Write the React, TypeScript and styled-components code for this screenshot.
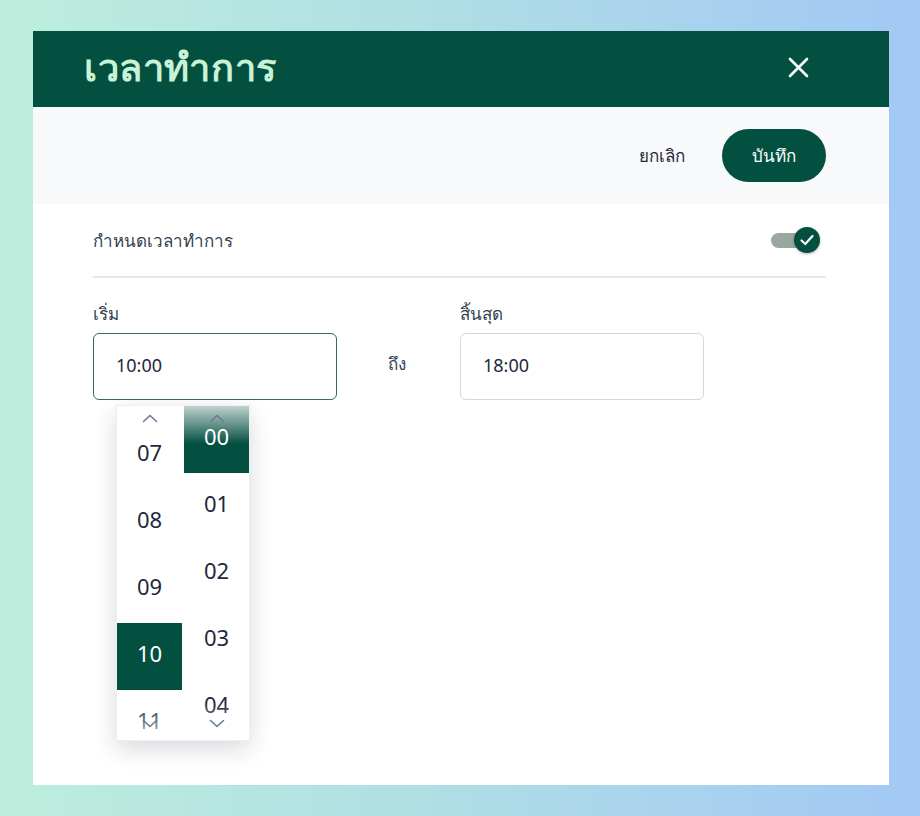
import styled, { createGlobalStyle } from "styled-components";

const GlobalStyle = createGlobalStyle`
  html, body {
    margin: 0;
    padding: 0;
  }
  body {
    font-family: "Noto Sans", "Inter", sans-serif;
    background: linear-gradient(90deg, #bdeedc 0%, #b0dfe4 45%, #a2c8f5 100%);
    min-height: 816px;
  }
`;

const Page = styled.div`
  width: 920px;
  height: 816px;
  padding: 31px 0 0 33px;
  box-sizing: border-box;
`;

const Modal = styled.div`
  width: 856px;
  height: 754px;
  background: #ffffff;
  display: flex;
  flex-direction: column;
`;

const Header = styled.div`
  height: 76px;
  background: #034f40;
  display: flex;
  align-items: center;
  justify-content: space-between;
  padding: 0 80px 4px 51px;
  box-sizing: border-box;
`;

const Title = styled.h1`
  margin: 0;
  font-size: 38px;
  font-weight: 600;
  color: #c9f3d6;
  letter-spacing: 0.6px;
`;

const CloseButton = styled.button`
  border: none;
  background: none;
  padding: 0;
  width: 22px;
  height: 22px;
  display: flex;
  align-items: center;
  justify-content: center;
  cursor: pointer;
`;

const ActionBar = styled.div`
  height: 97px;
  background: #f7f9fb;
  display: flex;
  align-items: center;
  justify-content: flex-end;
  gap: 37px;
  padding: 0 63px 0 60px;
  box-sizing: border-box;
`;

const TextButton = styled.button`
  border: none;
  background: none;
  padding: 0;
  font-family: inherit;
  font-size: 17px;
  color: #1f2937;
  cursor: pointer;
`;

const PrimaryButton = styled.button`
  border: none;
  height: 53px;
  width: 104px;
  border-radius: 27px;
  background: #034f40;
  color: #ffffff;
  font-family: inherit;
  font-size: 17px;
  cursor: pointer;
`;

const Body = styled.div`
  padding: 0 63px 0 60px;
  display: flex;
  flex-direction: column;
`;

const ToggleRow = styled.div`
  height: 72px;
  display: flex;
  align-items: center;
  justify-content: space-between;
  border-bottom: 2px solid #e3e9f1;
  padding-right: 6px;
`;

const RowLabel = styled.span`
  font-size: 17px;
  color: #334155;
`;

const Toggle = styled.div`
  position: relative;
  width: 49px;
  height: 26px;
  display: flex;
  align-items: center;
`;

const Track = styled.div`
  width: 36px;
  height: 15px;
  border-radius: 8px;
  background: #9aa6a1;
`;

const Thumb = styled.div`
  position: absolute;
  right: 0;
  top: 0;
  width: 26px;
  height: 26px;
  border-radius: 50%;
  background: #034f40;
  display: flex;
  align-items: center;
  justify-content: center;
  box-shadow: 0 1px 3px rgba(0, 0, 0, 0.3);
`;

const TimeRow = styled.div`
  display: flex;
  align-items: flex-end;
  margin-top: 25px;
`;

const Field = styled.div`
  position: relative;
  display: flex;
  flex-direction: column;
  gap: 8px;
`;

const FieldLabel = styled.label`
  font-size: 17px;
  color: #334155;
  line-height: 22px;
`;

const TimeInput = styled.div<{ $focused?: boolean }>`
  width: 244px;
  height: 67px;
  box-sizing: border-box;
  border-radius: 6px;
  border: 1px solid ${(p) => (p.$focused ? "#2f6f5e" : "#cfd8e3")};
  display: flex;
  align-items: center;
  padding: 0 0 3px 22px;
  font-size: 18px;
  color: #1e293b;
`;

const Between = styled.span`
  width: 123px;
  height: 67px;
  display: flex;
  align-items: center;
  justify-content: center;
  font-size: 17px;
  color: #334155;
  padding: 0 4px 6px 0;
  box-sizing: border-box;
`;

const Picker = styled.div`
  position: absolute;
  top: 102px;
  left: 23px;
  width: 134px;
  height: 336px;
  background: #ffffff;
  border: 1px solid #eceff3;
  box-sizing: border-box;
  box-shadow: 0 8px 22px rgba(15, 23, 42, 0.16);
  display: flex;
  gap: 2px;
  overflow: hidden;
`;

const Column = styled.div`
  position: relative;
  width: 65px;
  height: 100%;
  overflow: hidden;
`;

const List = styled.div<{ $offset: number }>`
  display: flex;
  flex-direction: column;
  padding-top: ${(p) => p.$offset}px;
`;

const Cell = styled.div<{ $selected?: boolean }>`
  height: 67px;
  flex: none;
  display: flex;
  align-items: center;
  justify-content: center;
  padding-bottom: 8px;
  box-sizing: border-box;
  font-size: 22px;
  color: ${(p) => (p.$selected ? "#ffffff" : "#1e293b")};
  background: ${(p) => (p.$selected ? "#034f40" : "transparent")};
`;

const Fade = styled.div<{ $bottom?: boolean }>`
  position: absolute;
  left: 0;
  right: 0;
  height: 38px;
  ${(p) => (p.$bottom ? "bottom: 0;" : "top: 0;")}
  background: linear-gradient(
    ${(p) => (p.$bottom ? "0deg" : "180deg")},
    rgba(255, 255, 255, 0.75) 0%,
    rgba(255, 255, 255, 0) 100%
  );
  display: flex;
  justify-content: center;
  align-items: ${(p) => (p.$bottom ? "flex-end" : "flex-start")};
  padding: ${(p) => (p.$bottom ? "0 0 12px" : "8px 0 0")};
  box-sizing: border-box;
`;

const Chevron = ({ down }: { down?: boolean }) => (
  <svg width="16" height="9" viewBox="0 0 16 9" fill="none">
    <path
      d={down ? "M1.5 1.5 L8 7.5 L14.5 1.5" : "M1.5 7.5 L8 1.5 L14.5 7.5"}
      stroke="#6b7a8c"
      strokeWidth="1.6"
      strokeLinecap="round"
      strokeLinejoin="round"
    />
  </svg>
);

const hours = ["07", "08", "09", "10", "11"];
const minutes = ["00", "01", "02", "03", "04"];

export default function App() {
  return (
    <>
      <GlobalStyle />
      <Page>
        <Modal>
          <Header>
            <Title>เวลาทำการ</Title>
            <CloseButton aria-label="close">
              <svg width="21" height="21" viewBox="0 0 21 21">
                <path
                  d="M2 2 L19 19 M19 2 L2 19"
                  stroke="#ffffff"
                  strokeWidth="2.6"
                  strokeLinecap="round"
                />
              </svg>
            </CloseButton>
          </Header>
          <ActionBar>
            <TextButton>ยกเลิก</TextButton>
            <PrimaryButton>บันทึก</PrimaryButton>
          </ActionBar>
          <Body>
            <ToggleRow>
              <RowLabel>กำหนดเวลาทำการ</RowLabel>
              <Toggle>
                <Track />
                <Thumb>
                  <svg width="16" height="16" viewBox="0 0 16 16" fill="none">
                    <path
                      d="M2.5 8.5 L6.3 12 L13.5 4"
                      stroke="#ffffff"
                      strokeWidth="2.2"
                      strokeLinecap="round"
                      strokeLinejoin="round"
                    />
                  </svg>
                </Thumb>
              </Toggle>
            </ToggleRow>
            <TimeRow>
              <Field>
                <FieldLabel>เริ่ม</FieldLabel>
                <TimeInput $focused>10:00</TimeInput>
                <Picker>
                  <Column>
                    <List $offset={16}>
                      {hours.map((h) => (
                        <Cell key={h} $selected={h === "10"}>
                          {h}
                        </Cell>
                      ))}
                    </List>
                    <Fade>
                      <Chevron />
                    </Fade>
                    <Fade $bottom>
                      <Chevron down />
                    </Fade>
                  </Column>
                  <Column>
                    <List $offset={0}>
                      {minutes.map((m) => (
                        <Cell key={m} $selected={m === "00"}>
                          {m}
                        </Cell>
                      ))}
                    </List>
                    <Fade>
                      <Chevron />
                    </Fade>
                    <Fade $bottom>
                      <Chevron down />
                    </Fade>
                  </Column>
                </Picker>
              </Field>
              <Between>ถึง</Between>
              <Field>
                <FieldLabel>สิ้นสุด</FieldLabel>
                <TimeInput>18:00</TimeInput>
              </Field>
            </TimeRow>
          </Body>
        </Modal>
      </Page>
    </>
  );
}
